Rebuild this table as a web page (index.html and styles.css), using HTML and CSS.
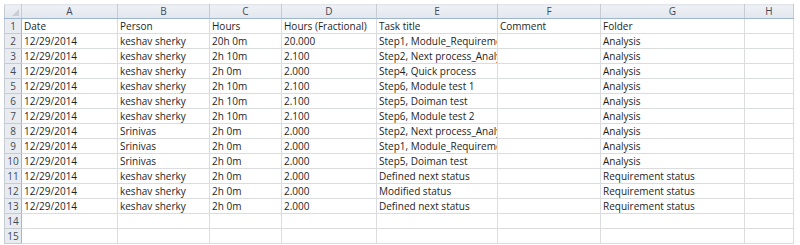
FILE: index.html
```html
<!DOCTYPE html>
<html>
<head>
<meta charset="utf-8">
<link rel="stylesheet" href="styles.css">
</head>
<body>
<table class="sheet">
<colgroup>
<col class="c-rh"><col class="c-a"><col class="c-b"><col class="c-c"><col class="c-d"><col class="c-e"><col class="c-f"><col class="c-g"><col class="c-h">
</colgroup>
<thead>
<tr class="colhdr"><th class="corner"><span class="tri"></span></th><th>A</th><th>B</th><th>C</th><th>D</th><th>E</th><th>F</th><th>G</th><th>H</th></tr>
</thead>
<tbody>
<tr><th>1</th><td>Date</td><td>Person</td><td>Hours</td><td>Hours (Fractional)</td><td>Task title</td><td>Comment</td><td>Folder</td><td></td></tr>
<tr><th>2</th><td>12/29/2014</td><td>keshav sherky</td><td>20h 0m</td><td>20.000</td><td>Step1, Module_Requirement</td><td></td><td>Analysis</td><td></td></tr>
<tr><th>3</th><td>12/29/2014</td><td>keshav sherky</td><td>2h 10m</td><td>2.100</td><td>Step2, Next process_Analysis</td><td></td><td>Analysis</td><td></td></tr>
<tr><th>4</th><td>12/29/2014</td><td>keshav sherky</td><td>2h 0m</td><td>2.000</td><td>Step4, Quick process</td><td></td><td>Analysis</td><td></td></tr>
<tr><th>5</th><td>12/29/2014</td><td>keshav sherky</td><td>2h 10m</td><td>2.100</td><td>Step6, Module test 1</td><td></td><td>Analysis</td><td></td></tr>
<tr><th>6</th><td>12/29/2014</td><td>keshav sherky</td><td>2h 10m</td><td>2.100</td><td>Step5, Doiman test</td><td></td><td>Analysis</td><td></td></tr>
<tr><th>7</th><td>12/29/2014</td><td>keshav sherky</td><td>2h 10m</td><td>2.100</td><td>Step6, Module test 2</td><td></td><td>Analysis</td><td></td></tr>
<tr><th>8</th><td>12/29/2014</td><td>Srinivas</td><td>2h 0m</td><td>2.000</td><td>Step2, Next process_Analysis</td><td></td><td>Analysis</td><td></td></tr>
<tr><th>9</th><td>12/29/2014</td><td>Srinivas</td><td>2h 0m</td><td>2.000</td><td>Step1, Module_Requirement</td><td></td><td>Analysis</td><td></td></tr>
<tr><th>10</th><td>12/29/2014</td><td>Srinivas</td><td>2h 0m</td><td>2.000</td><td>Step5, Doiman test</td><td></td><td>Analysis</td><td></td></tr>
<tr><th>11</th><td>12/29/2014</td><td>keshav sherky</td><td>2h 0m</td><td>2.000</td><td>Defined next status</td><td></td><td>Requirement status</td><td></td></tr>
<tr><th>12</th><td>12/29/2014</td><td>keshav sherky</td><td>2h 0m</td><td>2.000</td><td>Modified status</td><td></td><td>Requirement status</td><td></td></tr>
<tr><th>13</th><td>12/29/2014</td><td>keshav sherky</td><td>2h 0m</td><td>2.000</td><td>Defined next status</td><td></td><td>Requirement status</td><td></td></tr>
<tr><th>14</th><td></td><td></td><td></td><td></td><td></td><td></td><td></td><td></td></tr>
<tr><th>15</th><td></td><td></td><td></td><td></td><td></td><td></td><td></td><td></td></tr>
</tbody>
</table>
</body>
</html>
```
FILE: styles.css
```css
html, body {
  margin: 0;
  padding: 0;
  background: #ffffff;
}
body {
  padding: 4px 0 0 4px;
  font-family: "Open Sans", "Noto Sans", sans-serif;
  font-size: 10px;
  color: #1e1e1e;
}
.sheet {
  border-collapse: collapse;
  table-layout: fixed;
  width: 789px;
}
.c-rh { width: 17px; }
.c-a { width: 96px; }
.c-b { width: 92px; }
.c-c { width: 72px; }
.c-d { width: 95px; }
.c-e { width: 121px; }
.c-f { width: 103px; }
.c-g { width: 144px; }
.c-h { width: 49px; }
.sheet td, .sheet th {
  padding: 0 0 0 2px;
  height: 14px;
  line-height: 14px;
  white-space: nowrap;
  overflow: hidden;
  text-overflow: clip;
  border: 1px solid #dadcdd;
  border-left-color: #dadcdd;
}
.sheet th {
  background: #e8ecf1;
  font-weight: normal;
  color: #3f4a58;
  text-align: center;
  padding: 0;
  border-color: #c6ccd4;
}
.sheet tbody th {
  border-color: #c6ccd4;
  border-right-color: #9eb6ce;
}
.sheet td {
  text-align: left;
}
.colhdr th {
  height: 13px;
  line-height: 13px;
  background: linear-gradient(#eef1f5, #e2e7ee);
  border-bottom-color: #9eb6ce;
  border-top-color: #e2e6eb;
}
.corner {
  position: relative;
}
.tri {
  position: absolute;
  right: 2px;
  bottom: 2px;
  width: 0;
  height: 0;
  border-left: 7px solid transparent;
  border-bottom: 7px solid #c9ced6;
}
```
